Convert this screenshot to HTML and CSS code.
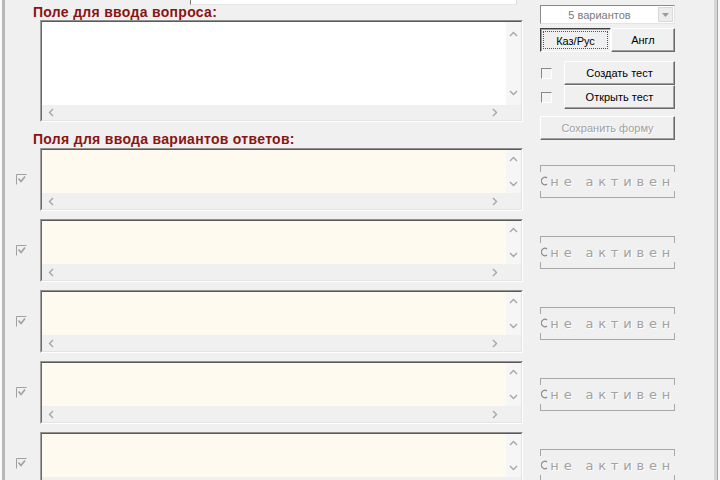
FILE: index.html
```html
<!DOCTYPE html>
<html lang="ru">
<head>
<meta charset="utf-8">
<title>Тест</title>
<link rel="stylesheet" href="styles.css">
</head>
<body>
<div class="window">
  <div class="top">
    <div class="left-col">
      <div class="stub"></div>
      <div class="label">Поле для ввода вопроса:</div>
      <div class="field field-q">
        <div class="inner">
          <div class="area white"></div>
          <div class="vscroll">
            <svg width="9" height="6" viewBox="0 0 9 6"><polyline points="1,5 4.5,1.5 8,5" /></svg>
            <svg width="9" height="6" viewBox="0 0 9 6"><polyline points="1,1 4.5,4.5 8,1" /></svg>
          </div>
          <div class="hscroll">
            <svg width="6" height="9" viewBox="0 0 6 9"><polyline points="5,1 1.5,4.5 5,8" /></svg>
            <svg width="6" height="9" viewBox="0 0 6 9"><polyline points="1,1 4.5,4.5 1,8" /></svg>
          </div>
          <div class="corner"></div>
        </div>
      </div>
      <div class="label label-ans">Поля для ввода вариантов ответов:</div>
    </div>
    <div class="right-col">
      <div class="combo">
        <span class="combo-text">5 вариантов</span>
        <span class="combo-btn"><svg width="7" height="4" viewBox="0 0 7 4"><polygon points="0,0 7,0 3.5,4" /></svg></span>
      </div>
      <div class="lang">
        <div class="btn pressed"><span class="focus">Каз/Рус</span></div>
        <div class="btn">Англ</div>
      </div>
      <div class="actions">
        <div class="act-row"><span class="cb"></span><div class="btn">Создать тест</div></div>
        <div class="act-row"><span class="cb"></span><div class="btn">Открыть тест</div></div>
      </div>
      <div class="btn disabled save">Сохранить форму</div>
    </div>
  </div>

  <div class="answers">
    <div class="ans-row">
      <span class="chk"><svg width="11" height="11" viewBox="0 0 11 11"><path class="chk-box" d="M0.5 10.5 V0.5 H10.5"/><polyline class="chk-mark" points="2.5,4.5 5,7.5 9,2.5"/></svg></span>
      <div class="field field-a"><div class="inner"><div class="area cream"></div><div class="vscroll"><svg width="9" height="6" viewBox="0 0 9 6"><polyline points="1,5 4.5,1.5 8,5" /></svg><svg width="9" height="6" viewBox="0 0 9 6"><polyline points="1,1 4.5,4.5 8,1" /></svg></div><div class="hscroll"><svg width="6" height="9" viewBox="0 0 6 9"><polyline points="5,1 1.5,4.5 5,8" /></svg><svg width="6" height="9" viewBox="0 0 6 9"><polyline points="1,1 4.5,4.5 1,8" /></svg></div><div class="corner"></div></div></div>
      <div class="group"><div class="gtop"></div><div class="gmid"><svg class="radio" width="8" height="10" viewBox="0 0 8 10"><path d="M6.5 1.6 A4 4 0 1 0 6.5 8.4"/></svg><span class="gtext">не активен</span></div><div class="gbot"></div></div>
    </div>
    <div class="ans-row">
      <span class="chk"><svg width="11" height="11" viewBox="0 0 11 11"><path class="chk-box" d="M0.5 10.5 V0.5 H10.5"/><polyline class="chk-mark" points="2.5,4.5 5,7.5 9,2.5"/></svg></span>
      <div class="field field-a"><div class="inner"><div class="area cream"></div><div class="vscroll"><svg width="9" height="6" viewBox="0 0 9 6"><polyline points="1,5 4.5,1.5 8,5" /></svg><svg width="9" height="6" viewBox="0 0 9 6"><polyline points="1,1 4.5,4.5 8,1" /></svg></div><div class="hscroll"><svg width="6" height="9" viewBox="0 0 6 9"><polyline points="5,1 1.5,4.5 5,8" /></svg><svg width="6" height="9" viewBox="0 0 6 9"><polyline points="1,1 4.5,4.5 1,8" /></svg></div><div class="corner"></div></div></div>
      <div class="group"><div class="gtop"></div><div class="gmid"><svg class="radio" width="8" height="10" viewBox="0 0 8 10"><path d="M6.5 1.6 A4 4 0 1 0 6.5 8.4"/></svg><span class="gtext">не активен</span></div><div class="gbot"></div></div>
    </div>
    <div class="ans-row">
      <span class="chk"><svg width="11" height="11" viewBox="0 0 11 11"><path class="chk-box" d="M0.5 10.5 V0.5 H10.5"/><polyline class="chk-mark" points="2.5,4.5 5,7.5 9,2.5"/></svg></span>
      <div class="field field-a"><div class="inner"><div class="area cream"></div><div class="vscroll"><svg width="9" height="6" viewBox="0 0 9 6"><polyline points="1,5 4.5,1.5 8,5" /></svg><svg width="9" height="6" viewBox="0 0 9 6"><polyline points="1,1 4.5,4.5 8,1" /></svg></div><div class="hscroll"><svg width="6" height="9" viewBox="0 0 6 9"><polyline points="5,1 1.5,4.5 5,8" /></svg><svg width="6" height="9" viewBox="0 0 6 9"><polyline points="1,1 4.5,4.5 1,8" /></svg></div><div class="corner"></div></div></div>
      <div class="group"><div class="gtop"></div><div class="gmid"><svg class="radio" width="8" height="10" viewBox="0 0 8 10"><path d="M6.5 1.6 A4 4 0 1 0 6.5 8.4"/></svg><span class="gtext">не активен</span></div><div class="gbot"></div></div>
    </div>
    <div class="ans-row">
      <span class="chk"><svg width="11" height="11" viewBox="0 0 11 11"><path class="chk-box" d="M0.5 10.5 V0.5 H10.5"/><polyline class="chk-mark" points="2.5,4.5 5,7.5 9,2.5"/></svg></span>
      <div class="field field-a"><div class="inner"><div class="area cream"></div><div class="vscroll"><svg width="9" height="6" viewBox="0 0 9 6"><polyline points="1,5 4.5,1.5 8,5" /></svg><svg width="9" height="6" viewBox="0 0 9 6"><polyline points="1,1 4.5,4.5 8,1" /></svg></div><div class="hscroll"><svg width="6" height="9" viewBox="0 0 6 9"><polyline points="5,1 1.5,4.5 5,8" /></svg><svg width="6" height="9" viewBox="0 0 6 9"><polyline points="1,1 4.5,4.5 1,8" /></svg></div><div class="corner"></div></div></div>
      <div class="group"><div class="gtop"></div><div class="gmid"><svg class="radio" width="8" height="10" viewBox="0 0 8 10"><path d="M6.5 1.6 A4 4 0 1 0 6.5 8.4"/></svg><span class="gtext">не активен</span></div><div class="gbot"></div></div>
    </div>
    <div class="ans-row">
      <span class="chk"><svg width="11" height="11" viewBox="0 0 11 11"><path class="chk-box" d="M0.5 10.5 V0.5 H10.5"/><polyline class="chk-mark" points="2.5,4.5 5,7.5 9,2.5"/></svg></span>
      <div class="field field-a"><div class="inner"><div class="area cream"></div><div class="vscroll"><svg width="9" height="6" viewBox="0 0 9 6"><polyline points="1,5 4.5,1.5 8,5" /></svg><svg width="9" height="6" viewBox="0 0 9 6"><polyline points="1,1 4.5,4.5 8,1" /></svg></div><div class="hscroll"><svg width="6" height="9" viewBox="0 0 6 9"><polyline points="5,1 1.5,4.5 5,8" /></svg><svg width="6" height="9" viewBox="0 0 6 9"><polyline points="1,1 4.5,4.5 1,8" /></svg></div><div class="corner"></div></div></div>
      <div class="group"><div class="gtop"></div><div class="gmid"><svg class="radio" width="8" height="10" viewBox="0 0 8 10"><path d="M6.5 1.6 A4 4 0 1 0 6.5 8.4"/></svg><span class="gtext">не активен</span></div><div class="gbot"></div></div>
    </div>
  </div>
</div>
</body>
</html>
```

FILE: styles.css
```css
* { box-sizing: border-box; }
html, body {
  margin: 0;
  padding: 0;
  width: 720px;
  height: 480px;
  overflow: hidden;
  background: #f0f0f0;
  font-family: "Liberation Sans", Arial, sans-serif;
}
.window {
  width: 720px;
  height: 480px;
  padding-left: 2px;
  padding-right: 2px;
  display: flex;
  flex-direction: column;
  border-left: 2px solid #fafafa;
  border-right: 2px solid #f7f7f7;
  box-shadow: inset 3px 0 0 #b8b8b8, inset -1px 0 0 #a8a8a8, inset -4px 0 0 #d6d6d6;
}

/* top */
.top {
  display: flex;
  gap: 17px;
  padding-left: 29px;
}
.left-col {
  width: 490px;
  display: flex;
  flex-direction: column;
}
.stub {
  margin-left: 157px;
  width: 327px;
  height: 5px;
  background: #fff;
  border-left: 1px solid #7a7a7a;
  border-bottom: 1px solid #e6e6e6;
  border-right: 1px solid #dcdcdc;
}
.label {
  font-weight: bold;
  font-size: 14px;
  line-height: 15px;
  height: 15px;
  color: #8a1414;
  letter-spacing: 0.3px;
  white-space: nowrap;
}
.label-ans {
  margin-top: 10px;
}

/* fields */
.field {
  margin-left: 7px;
  width: 483px;
  border-top: 1px solid #909090;
  border-left: 1px solid #a0a0a0;
  border-right: 1px solid #ffffff;
  border-bottom: 1px solid #ffffff;
}
.field .inner {
  width: 100%;
  height: 100%;
  border-top: 1px solid #5a5a5a;
  border-left: 1px solid #6a6a6a;
  border-right: 1px solid #e3e3e3;
  border-bottom: 1px solid #e3e3e3;
  display: grid;
  grid-template-columns: 1fr 15px;
}
.field-q { height: 102px; }
.field-q .inner { grid-template-rows: 1fr 15px; }
.field-a { height: 63px; margin-left: 0; }
.field-a .inner { grid-template-rows: 1fr 16px; }
.area.white { background: #ffffff; }
.area.cream { background: #fffaf0; }
.vscroll {
  background: #f6f6f6;
  display: flex;
  flex-direction: column;
  justify-content: space-between;
  align-items: center;
  padding: 6px 0;
}
.field-q .vscroll { padding: 9px 0; }
.hscroll {
  background: #f0f0f0;
  display: flex;
  justify-content: space-between;
  align-items: center;
  padding: 0 8px 0 6px;
}
.corner { background: #f0f0f0; }
.vscroll polyline, .hscroll polyline {
  fill: none;
  stroke: #a6a6a6;
  stroke-width: 1.4;
}

/* right column */
.right-col {
  width: 135px;
  padding-top: 5px;
  display: flex;
  flex-direction: column;
  font-size: 11px;
}
.combo {
  height: 19px;
  background: #fff;
  border-top: 1px solid #8a8a8a;
  border-left: 1px solid #8a8a8a;
  border-right: 1px solid #e3e3e3;
  border-bottom: 1px solid #e3e3e3;
  display: flex;
  align-items: center;
  padding-right: 1px;
}
.combo-text {
  flex: 1;
  text-align: center;
  color: #7a7a7a;
  font-size: 11px;
}
.combo-btn {
  width: 15px;
  height: 15px;
  background: #ececec;
  border: 1px solid #d8d8d8;
  display: flex;
  align-items: center;
  justify-content: center;
}
.combo-btn polygon { fill: #9a9a9a; }

.btn {
  height: 24px;
  display: flex;
  align-items: center;
  justify-content: center;
  font-size: 11px;
  color: #000;
  background: #f0f0f0;
  border-top: 1px solid #ffffff;
  border-left: 1px solid #ffffff;
  border-right: 1px solid #696969;
  border-bottom: 1px solid #696969;
  box-shadow: inset -1px -1px 0 #a0a0a0;
}
.lang {
  margin-top: 4px;
  display: flex;
}
.lang .btn { flex: 0 0 auto; }
.lang .btn:first-child { width: 71px; }
.lang .btn:last-child { width: 64px; }
.btn.pressed {
  border-top: 1px solid #404040;
  border-left: 1px solid #404040;
  border-right: 1px solid #ffffff;
  border-bottom: 1px solid #ffffff;
  box-shadow: inset 1px 1px 0 #a0a0a0;
  padding: 2px;
}
.focus {
  display: flex;
  align-items: center;
  justify-content: center;
  width: 100%;
  height: 100%;
  border: 1px dotted #555;
  padding-top: 1px;
}
.actions {
  margin-top: 9px;
  display: flex;
  flex-direction: column;
}
.act-row {
  display: flex;
  align-items: center;
  gap: 12px;
  padding-left: 1px;
}
.act-row .btn { flex: 1; }
.cb {
  width: 11px;
  height: 11px;
  border-top: 1px solid #8a8a8a;
  border-left: 1px solid #8a8a8a;
  border-right: 1px solid #ffffff;
  border-bottom: 1px solid #ffffff;
  background: #f4f4f4;
}
.save {
  margin-top: 7px;
}
.btn.disabled {
  color: #a0a0a0;
  text-shadow: 1px 1px 0 #ffffff;
}

/* answers */
.answers {
  margin-top: 1px;
  display: flex;
  flex-direction: column;
  gap: 8px;
}
.ans-row {
  display: flex;
  align-items: center;
  padding-left: 12px;
}
.chk {
  width: 24px;
  display: flex;
  align-items: center;
}
.chk-box { fill: none; stroke: #a0a0a0; stroke-width: 1; }
.chk-mark { fill: none; stroke: #a0a0a0; stroke-width: 1.6; }
.group {
  margin-left: 17px;
  width: 135px;
  height: 33px;
  display: flex;
  flex-direction: column;
  margin-top: 3px;
}
.gtop {
  height: 7px;
  border-top: 1px solid #a8a8a8;
  border-left: 1px solid #a8a8a8;
  border-right: 1px solid #a8a8a8;
}
.gbot {
  height: 7px;
  border-bottom: 1px solid #a8a8a8;
  border-left: 1px solid #a8a8a8;
  border-right: 1px solid #a8a8a8;
}
.gmid {
  flex: 1;
  display: flex;
  align-items: center;
  gap: 2px;
  padding-left: 1px;
}
.radio path { fill: none; stroke: #888888; stroke-width: 1.3; }
.gtext {
  font-family: "DejaVu Sans", sans-serif;
  font-size: 13px;
  letter-spacing: 4.8px;
  color: #a2a2a2;
  text-shadow: 1px 1px 0 #ffffff;
  white-space: nowrap;
}
```
